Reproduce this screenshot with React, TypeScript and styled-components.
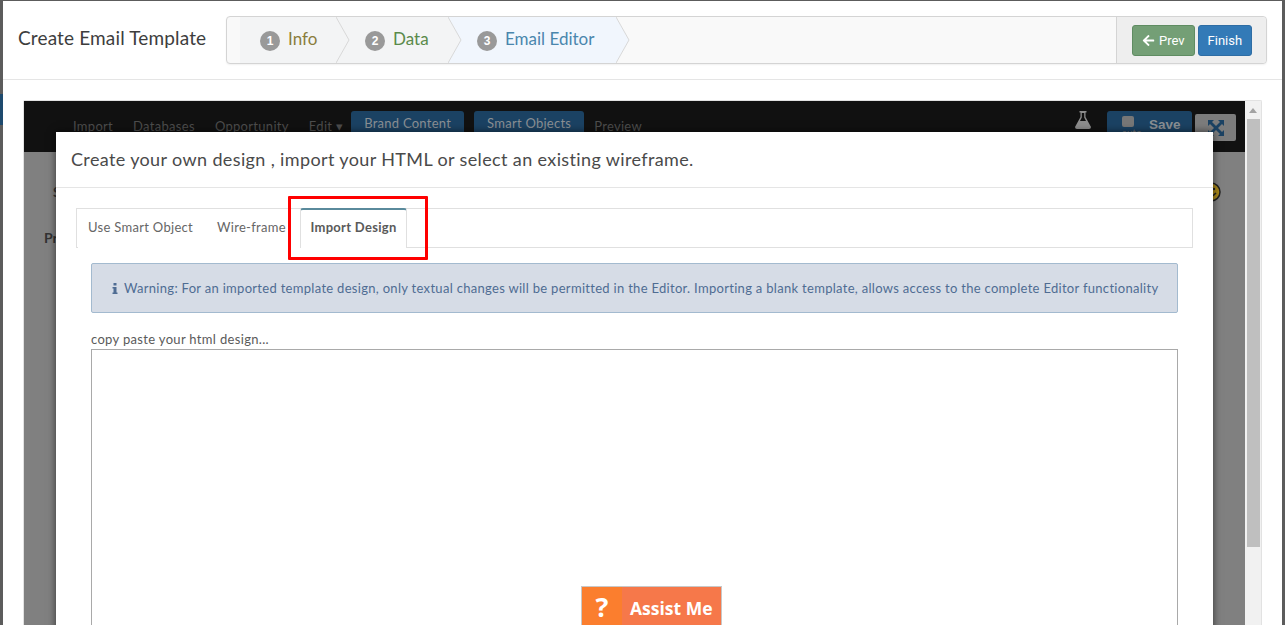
import React from 'react'
import styled, { createGlobalStyle } from 'styled-components'
import { FaArrowLeft } from 'react-icons/fa'

const Global = createGlobalStyle`
  html, body { margin: 0; padding: 0; overflow: hidden; background: #5c5c5c; }
  * { box-sizing: border-box; }
  body { font-family: Lato, "Open Sans", sans-serif; color: #444; }
`

const Shell = styled.div`
  width: 1285px;
  height: 625px;
  padding: 1px 3px 0 3px;
  overflow: hidden;
  background: linear-gradient(to bottom, #5c5c5c 94px, #1e4a6e 94px, #1e4a6e 125px, #5c5c5c 125px) left top / 3px 100% no-repeat;
`

const Dialog = styled.div`
  background: #fff;
  height: 100%;
  display: flex;
  flex-direction: column;
`

const Header = styled.header`
  flex: none;
  height: 79px;
  display: flex;
  align-items: center;
  padding: 0 15px;
  border-bottom: 1px solid #e5e5e5;
`

const Title = styled.h1`
  margin: 0 0 5px;
  width: 208px;
  font-size: 19px;
  font-weight: 400;
  letter-spacing: .15px;
  color: #3d3d3d;
`

const Wizard = styled.div`
  flex: 1;
  height: 48px;
  display: flex;
  background: #f9f9f9;
  border: 1px solid #d4d4d4;
  border-radius: 4px;
  box-shadow: 0 1px 2px rgba(0, 0, 0, .06);
  padding-left: 13px;
`

const Step = styled.div<{ $active?: boolean; $width: number; $inset: number }>`
  position: relative;
  width: ${p => p.$width}px;
  display: flex;
  align-items: center;
  padding-left: ${p => p.$inset}px;
  gap: 8px;
  background: ${p => (p.$active ? '#f1f6fd' : '#f3f4f5')};
`

const Chevron = styled.svg`
  position: absolute;
  left: 100%;
  top: 0;
  width: 14px;
  height: 46px;
  z-index: 1;
`

const Badge = styled.span`
  width: 20px;
  height: 20px;
  border-radius: 50%;
  background: #999;
  color: #fff;
  font: 700 12px/20px "Liberation Sans", sans-serif;
  text-align: center;
  margin-top: 2px;
`

const StepLabel = styled.span<{ $color: string }>`
  font-size: 17px;
  margin-bottom: 4px;
  color: ${p => p.$color};
`

const WizardActions = styled.div`
  margin-left: auto;
  width: 150px;
  display: flex;
  align-items: center;
  gap: 3px;
  padding: 0 0 0 15px;
  background: #eee;
  border-left: 1px solid #d4d4d4;
  border-radius: 0 4px 4px 0;
`

const ActionButton = styled.button<{ $bg: string; $border: string }>`
  height: 31px;
  padding: 0 9px;
  display: flex;
  align-items: center;
  gap: 4px;
  background: ${p => p.$bg};
  border: 1px solid ${p => p.$border};
  border-radius: 3px;
  color: #fff;
  font-family: "Roboto", sans-serif;
  font-size: 13px;
`

const Body = styled.div`
  flex: 1;
  min-height: 0;
  padding: 20px 20px 0 20px;
`

const Frame = styled.div`
  position: relative;
  height: 100%;
  display: flex;
  border: 1px solid #e2e2e2;
  border-bottom: 0;
  border-radius: 2px 2px 0 0;
`

const Canvas = styled.div`
  flex: 1;
  min-width: 0;
  display: flex;
  flex-direction: column;
  background: #808080;
`

const NavBar = styled.div`
  flex: none;
  height: 51px;
  background: #111;
  display: flex;
  align-items: flex-start;
  padding: 10px 9px 0 49px;
  color: #4d4d4d;
  font-size: 13px;
  letter-spacing: .3px;
`

const NavItem = styled.span<{ $gap?: number }>`
  margin-top: 7px;
  margin-right: ${p => p.$gap ?? 20}px;
`

const NavPill = styled.span`
  height: 26px;
  padding: 4px 13px 0;
  margin-right: 10px;
  background: #1b4263;
  border-radius: 3px 3px 0 0;
  color: #8a8f93;
  letter-spacing: .25px;
`

const Spacer = styled.div`
  flex: 1;
`

const ToolStack = styled.div`
  width: 16px;
  margin-right: 16px;
  display: flex;
  flex-direction: column;
  align-items: center;
  color: #777;
  font-size: 10px;
  line-height: 12px;
  letter-spacing: 0;
`

const Flask = styled.svg`
  flex: none;
  width: 16px;
  height: 18px;
`

const SavePill = styled.div`
  width: 85px;
  height: 32px;
  display: flex;
  padding-left: 13px;
  background: #1b4263;
  border-radius: 3px;
  color: #8a8f93;
  font: 700 13.5px/28px "Liberation Sans", sans-serif;
  letter-spacing: 0;
`

const AutoStack = styled.div`
  width: 29px;
  padding: 5px 0 0 2px;
  font: 400 10px/10px Lato, sans-serif;
  color: #777;
`

const AutoBox = styled.span`
  display: block;
  width: 12px;
  height: 11px;
  background: #777;
  border-radius: 2px;
`

const ExpandButton = styled.div`
  width: 41px;
  height: 27px;
  margin: 3px 0 0 3px;
  background: #7c7c7c;
  border-radius: 2px;
  display: flex;
  align-items: center;
  justify-content: center;
`

const CanvasBody = styled.div`
  flex: 1;
  position: relative;
  padding: 31px 0 0 20px;
  color: #333;
  font-size: 14px;
  font-weight: 700;
`

const CanvasLine = styled.div<{ $indent: number; $gap: number }>`
  margin-left: ${p => p.$indent}px;
  margin-bottom: ${p => p.$gap}px;
  line-height: 18px;
`

const Scrollbar = styled.div`
  flex: none;
  width: 16px;
  display: flex;
  flex-direction: column;
  align-items: center;
  background: #f1f1f1;
`

const ScrollArrow = styled.div`
  flex: none;
  margin: 7px 0 6px;
  width: 0;
  height: 0;
  border: 4px solid transparent;
  border-top: 0;
  border-bottom: 5px solid #a3a3a3;
`

const ScrollThumb = styled.div`
  width: 13px;
  height: 428px;
  background: #bfbfbf;
`

const Smiley = styled.svg`
  position: absolute;
  right: 40px;
  top: 81px;
  width: 20px;
  height: 20px;
`

const Modal = styled.div`
  position: absolute;
  left: 32px;
  top: 31px;
  width: 1157px;
  height: 520px;
  background: #fff;
  box-shadow: 0 0 8px rgba(0, 0, 0, .6);
`

const ModalHead = styled.div`
  height: 56px;
  padding: 16px 15px 0;
  border-bottom: 1px solid #e5e5e5;
  font-size: 18px;
  letter-spacing: .37px;
  color: #4a4a4a;
`

const ModalBody = styled.div`
  padding: 20px 20px 0;
`

const Tabs = styled.div`
  height: 40px;
  display: flex;
  padding-left: 1px;
  border: 1px solid #e0e0e0;
`

const Tab = styled.div<{ $active?: boolean; $width: number }>`
  position: relative;
  width: ${p => p.$width}px;
  height: 39px;
  padding-top: 10px;
  text-align: center;
  font-size: 13px;
  letter-spacing: .3px;
  font-weight: ${p => (p.$active ? 700 : 400)};
  color: ${p => (p.$active ? '#5a5a5a' : '#666')};
  background: #fff;
  ${p => p.$active && `
    border: 1px solid #e0e0e0;
    border-top: 2px solid #5a8a9c;
    border-bottom: 0;
    border-radius: 3px 3px 0 0;
    padding-top: 9px;
    height: 40px;
    margin-top: -1px;
  `}
`

const Highlight = styled.div`
  position: absolute;
  left: 232px;
  top: 64px;
  width: 140px;
  height: 64px;
  border: 3px solid #ff0000;
  border-radius: 1px;
  pointer-events: none;
`

const Content = styled.div`
  padding: 15px 15px 0;
`

const Alert = styled.div`
  height: 50px;
  display: flex;
  align-items: center;
  gap: 6px;
  padding-left: 20px;
  background: #d6dce6;
  border: 1px solid #a3bacf;
  border-radius: 2px;
  color: #4f6c93;
  font-size: 13px;
  letter-spacing: .3px;
`

const InfoGlyph = styled.svg`
  width: 6px;
  height: 11px;
`

const FieldLabel = styled.label`
  display: block;
  margin-top: 17px;
  margin-bottom: 1px;
  font-size: 13px;
  line-height: 18px;
  letter-spacing: .33px;
  color: #5a5a5a;
`

const HtmlArea = styled.div`
  height: 300px;
  border: 1px solid #a9a9a9;
`

const Assist = styled.div`
  position: absolute;
  left: 581px;
  top: 586px;
  width: 141px;
  height: 39px;
  display: flex;
  background: #f6784a;
  border: 1px solid #c8c8c8;
  border-bottom: 0;
  color: #fff;
  font: 700 17.5px/42px "Open Sans", sans-serif;
`

const AssistIcon = styled.span`
  width: 40px;
  background: #fb7e2e;
  text-align: center;
  font-size: 27px;
  line-height: 40px;
`

const AssistLabel = styled.span`
  padding-left: 8px;
`

const steps = [
  { n: 1, label: 'Info', color: '#8a7d3c', width: 96, inset: 20 },
  { n: 2, label: 'Data', color: '#5a8a4a', width: 112, inset: 29 },
  { n: 3, label: 'Email Editor', color: '#4a86ad', width: 168, inset: 29, active: true },
]

const App = () => (
  <>
    <Global />
    <Shell>
      <Dialog>
        <Header>
          <Title>Create Email Template</Title>
          <Wizard>
            {steps.map(s => (
              <Step key={s.n} $width={s.width} $inset={s.inset} $active={s.active}>
                <Badge>{s.n}</Badge>
                <StepLabel $color={s.color}>{s.label}</StepLabel>
                <Chevron viewBox="0 0 14 46">
                  <path d="M0 0 L13 23 L0 46 Z" fill={s.active ? '#f1f6fd' : '#f3f4f5'} />
                  <path d="M0 0 L13 23 L0 46" fill="none" stroke="#d8d8d8" />
                </Chevron>
              </Step>
            ))}
            <WizardActions>
              <ActionButton $bg="#749f76" $border="#5f8c62">
                <FaArrowLeft size={13} />
                Prev
              </ActionButton>
              <ActionButton $bg="#337ab7" $border="#2e6da4">Finish</ActionButton>
            </WizardActions>
          </Wizard>
        </Header>
        <Body>
          <Frame>
            <Canvas>
              <NavBar>
                <NavItem>Import</NavItem>
                <NavItem>Databases</NavItem>
                <NavItem>Opportunity</NavItem>
                <NavItem $gap={8}>Edit ▾</NavItem>
                <NavPill>Brand Content</NavPill>
                <NavPill>Smart Objects</NavPill>
                <NavItem>Preview</NavItem>
                <Spacer />
                <ToolStack>
                  <Flask viewBox="0 0 16 18">
                    <path d="M4.5 0 H11.5 V1.5 H10.5 V6 L16 16 Q16 18 14 18 H2 Q0 18 0 16 L5.5 6 V1.5 H4.5 Z" fill="#8d8d8d" />
                    <path d="M6.8 2 H9.2 V6.5 L11 10 H5 L6.8 6.5 Z" fill="#111" />
                  </Flask>
                  Test
                </ToolStack>
                <SavePill>
                  <AutoStack>
                    <AutoBox />
                    auto
                  </AutoStack>
                  Save
                </SavePill>
                <ExpandButton>
                  <svg width="16" height="16" viewBox="0 0 16 16"><path d="M0 0 H6 L4 2 L8 6 L12 2 L10 0 H16 V6 L14 4 L10 8 L14 12 L16 10 V16 H10 L12 14 L8 10 L4 14 L6 16 H0 V10 L2 12 L6 8 L2 4 L0 6 Z" fill="#1b4263" /></svg>
                </ExpandButton>
              </NavBar>
              <CanvasBody>
                <CanvasLine $indent={9} $gap={28}>S</CanvasLine>
                <CanvasLine $indent={0} $gap={0}>Pr</CanvasLine>
              </CanvasBody>
            </Canvas>
            <Scrollbar>
              <ScrollArrow />
              <ScrollThumb />
            </Scrollbar>
            <Smiley viewBox="0 0 20 20">
              <circle cx="10" cy="10" r="9" fill="#a8871a" stroke="#222" strokeWidth="1.5" />
              <path d="M5 11 Q10 17 15 11" fill="none" stroke="#222" strokeWidth="1.5" />
              <circle cx="13" cy="7" r="1.2" fill="#222" />
            </Smiley>
            <Modal>
              <ModalHead>Create your own design , import your HTML or select an existing wireframe.</ModalHead>
              <ModalBody>
                <Tabs>
                  <Tab $width={125}>Use Smart Object</Tab>
                  <Tab $width={97}>Wire-frame</Tab>
                  <Tab $width={107} $active>Import Design</Tab>
                </Tabs>
                <Content>
                  <Alert>
                    <InfoGlyph viewBox="0 0 6 11"><path d="M1.5 0 H4.5 V2.5 H1.5 Z M0.5 4 H4.5 V9.5 H5.5 V11 H0.5 V9.5 H1.5 V5.5 H0.5 Z" fill="#4f6c93" /></InfoGlyph>
                    Warning: For an imported template design, only textual changes will be permitted in the Editor. Importing a blank template, allows access to the complete Editor functionality
                  </Alert>
                  <FieldLabel>copy paste your html design...</FieldLabel>
                  <HtmlArea />
                </Content>
              </ModalBody>
              <Highlight />
            </Modal>
          </Frame>
        </Body>
      </Dialog>
    </Shell>
    <Assist>
      <AssistIcon>?</AssistIcon>
      <AssistLabel>Assist Me</AssistLabel>
    </Assist>
  </>
)

export default App
